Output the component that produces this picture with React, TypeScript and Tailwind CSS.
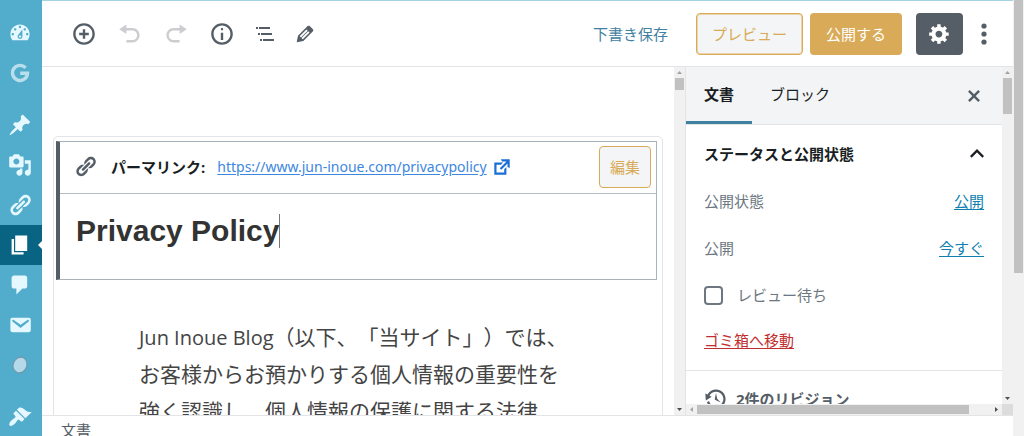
import { ReactNode, useState } from 'react';

const ICONS = {
  dashboard:
    'M3.76 16h12.48c1.1-1.37 1.76-3.11 1.76-5 0-4.42-3.58-8-8-8s-8 3.58-8 8c0 1.89.66 3.63 1.76 5zM10 4c.55 0 1 .45 1 1s-.45 1-1 1-1-.45-1-1 .45-1 1-1zM6 6c.55 0 1 .45 1 1s-.45 1-1 1-1-.45-1-1 .45-1 1-1zm8 0c.55 0 1 .45 1 1s-.45 1-1 1-1-.45-1-1 .45-1 1-1zm-5.37 5.55L12 7v6c0 1.1-.9 2-2 2s-2-.9-2-2c0-.57.24-1.08.63-1.45zM4 10c.55 0 1 .45 1 1s-.45 1-1 1-1-.45-1-1 .45-1 1-1zm12 0c.55 0 1 .45 1 1s-.45 1-1 1-1-.45-1-1 .45-1 1-1zm-5 3c0-.55-.45-1-1-1s-1 .45-1 1 .45 1 1 1 1-.45 1-1z',
  pin: 'M10.44 3.02l1.82-1.82 6.36 6.35-1.83 1.82c-1.05-.68-2.48-.57-3.41.36l-.75.75c-.92.93-1.04 2.35-.35 3.41l-1.83 1.82-2.41-2.41-2.8 2.79c-.42.42-3.38 2.71-3.8 2.29s1.86-3.39 2.28-3.81l2.79-2.79L4.1 9.36l1.83-1.82c1.05.69 2.48.57 3.4-.36l.75-.75c.93-.92 1.05-2.35.36-3.41z',
  media:
    'M13 11V4c0-.55-.45-1-1-1h-1.67L9 1H5L3.67 3H2c-.55 0-1 .45-1 1v7c0 .55.45 1 1 1h10c.55 0 1-.45 1-1zM7 4.5c1.38 0 2.5 1.12 2.5 2.5S8.38 9.5 7 9.5 4.5 8.38 4.5 7 5.62 4.5 7 4.5zM14 6h5v10.5c0 1.38-1.12 2.5-2.5 2.5S14 17.88 14 16.5s1.12-2.5 2.5-2.5c.17 0 .34.02.5.05V9h-3V6zm-4 8.05V13h2v3.5c0 1.38-1.12 2.5-2.5 2.5S7 17.88 7 16.5 8.12 14 9.5 14c.17 0 .34.02.5.05z',
  link: 'M17.74 2.76c1.68 1.69 1.68 4.41 0 6.1l-1.53 1.52c-1.12 1.12-2.7 1.47-4.14 1.09l2.62-2.61.76-.77.76-.76c.84-.84.84-2.2 0-3.04-.84-.85-2.2-.85-3.04 0l-.77.76-3.38 3.38c-.37-1.44-.02-3.02 1.1-4.14l1.52-1.53c1.69-1.68 4.42-1.68 6.1 0zM8.59 13.43l5.34-5.34c.42-.42.42-1.1 0-1.52-.44-.43-1.13-.39-1.53 0l-5.33 5.34c-.42.42-.42 1.1 0 1.52.44.43 1.13.39 1.52 0zm-.76 2.29l4.14-4.15c.38 1.44.03 3.02-1.09 4.14l-1.52 1.53c-1.69 1.68-4.41 1.68-6.1 0-1.68-1.68-1.68-4.42 0-6.1l1.53-1.52c1.12-1.12 2.7-1.47 4.14-1.1l-4.14 4.15c-.85.84-.85 2.2 0 3.05.84.84 2.2.84 3.04 0z',
  page: 'M6 15V2h10v13H6zm-1 1h8v2H3V5h2v11z',
  comment: 'M5 2h9c1.1 0 2 .9 2 2v7c0 1.1-.9 2-2 2h-2l-5 5v-5H5c-1.1 0-2-.9-2-2V4c0-1.1.9-2 2-2z',
  mail: 'M3.87 4h13.25C18.37 4 19 4.59 19 5.79v8.42c0 1.19-.63 1.79-1.88 1.79H3.87c-1.25 0-1.88-.6-1.88-1.79V5.79c0-1.2.63-1.79 1.88-1.79zm6.62 8.6l6.74-5.53c.24-.2.43-.66.13-1.07-.29-.41-.82-.42-1.17-.17l-5.7 3.86L4.8 5.83c-.35-.25-.88-.24-1.17.17-.3.41-.11.87.13 1.07z',
  brush:
    'M14.48 11.06L7.41 3.99l1.5-1.5c.5-.56 2.3-.47 3.51.32 1.21.8 1.43 1.28 2.91 2.1 1.18.64 2.45 1.26 4.45.85zm-.71.71L6.7 4.7 4.93 6.47c-.39.39-.39 1.02 0 1.41l1.06 1.06c.39.39.39 1.03 0 1.42-.6.6-1.43 1.11-2.21 1.69-.35.26-.7.53-1.01.84C1.43 14.23.4 16.08 1.4 17.07c.99 1 2.84-.03 4.18-1.36.31-.31.58-.66.85-1.02.57-.78 1.08-1.61 1.69-2.21.39-.39 1.02-.39 1.41 0l1.06 1.06c.39.39 1.02.39 1.41 0z',
  insert:
    'M10 1c-5 0-9 4-9 9s4 9 9 9 9-4 9-9-4-9-9-9zm0 16c-3.9 0-7-3.1-7-7s3.1-7 7-7 7 3.1 7 7-3.1 7-7 7zm1-11H9v3H6v2h3v3h2v-3h3V9h-3V6z',
  undo: 'M12 5H7V2L1 6l6 4V7h5c2.2 0 4 1.8 4 4s-1.8 4-4 4H7v2h5c3.3 0 6-2.7 6-6s-2.7-6-6-6z',
  redo: 'M8 5h5V2l6 4-6 4V7H8c-2.2 0-4 1.8-4 4s1.8 4 4 4h5v2H8c-3.3 0-6-2.7-6-6s2.7-6 6-6z',
  info: 'M9 15h2V9H9v6zm1-10c-.5 0-1 .5-1 1s.5 1 1 1 1-.5 1-1-.5-1-1-1zm0-4c-5 0-9 4-9 9s4 9 9 9 9-4 9-9-4-9-9-9zm0 16c-3.9 0-7-3.1-7-7s3.1-7 7-7 7 3.1 7 7-3.1 7-7 7z',
  edit: 'M13.89 3.39l2.71 2.72c.46.46.42 1.24.03 1.64l-8.01 8.02-5.56 1.16 1.16-5.58s7.6-7.63 7.99-8.03c.39-.39 1.22-.39 1.68.07zm-2.73 2.79l-5.59 5.61 1.11 1.11 5.54-5.65zm-2.97 8.23l5.58-5.6-1.07-1.08-5.59 5.6z',
  gear: 'M18 12h-2.18c-.17.7-.44 1.35-.81 1.93l1.54 1.54-2.1 2.1-1.54-1.54c-.58.36-1.23.63-1.91.79V19H8v-2.18c-.68-.16-1.33-.43-1.91-.79l-1.54 1.54-2.12-2.12 1.54-1.54c-.36-.58-.63-1.23-.79-1.91H1V9.03h2.17c.16-.7.44-1.35.8-1.94L2.43 5.55l2.1-2.1 1.54 1.54c.58-.37 1.24-.64 1.93-.81V2h3v2.18c.68.16 1.33.43 1.91.79l1.54-1.54 2.12 2.12-1.54 1.54c.36.59.64 1.24.8 1.94H18V12zm-8.5 1.5c1.66 0 3-1.34 3-3s-1.34-3-3-3-3 1.34-3 3 1.34 3 3 3z',
  close:
    'M14.95 6.46L11.41 10l3.54 3.54-1.41 1.41L10 11.42l-3.53 3.53-1.42-1.42L8.58 10 5.05 6.47l1.42-1.42L10 8.58l3.54-3.53z',
  external: 'M9 3h8v8l-2-1V6.92l-5.6 5.59-1.41-1.41L14.08 5H10zm3 12v-3l2-2v7H3V6h8L9 8H5v7h7z',
  backup:
    'M13.65 2.88c3.93 2.01 5.48 6.84 3.47 10.77s-6.83 5.48-10.77 3.47c-1.87-.96-3.2-2.56-3.86-4.4l1.64-1.03c.45 1.57 1.52 2.95 3.08 3.76 3.01 1.54 6.69.35 8.23-2.66 1.55-3.01.36-6.69-2.65-8.24C9.78 3.01 6.1 4.2 4.56 7.21l1.88.97-4.95 3.08-.39-5.82 1.78.91C4.9 2.4 9.75.89 13.65 2.88zm-4.36 7.83C9.11 10.53 9 10.28 9 10c0-.07.03-.12.04-.19h-.01L10 5l.97 4.81L14 13l-4.5-2.12.02-.02c-.08-.04-.16-.09-.23-.15z',
};

type IconName = keyof typeof ICONS;

function Icon({ name, className = 'size-6' }: { name: IconName; className?: string }) {
  return (
    <svg viewBox="0 0 20 20" fill="currentColor" className={`shrink-0 ${className}`} aria-hidden="true">
      <path d={ICONS[name]} />
    </svg>
  );
}

function NavItem({ label, active, children }: { label: string; active?: boolean; children: ReactNode }) {
  return (
    <a
      href="#"
      aria-label={label}
      className={`relative flex h-10 shrink-0 items-center justify-center pr-0.5 ${active ? 'bg-[#096484] text-white' : 'text-[#e5f8ff]'}`}
    >
      {children}
      {active && (
        <span className="absolute right-0 top-4 border-y-4 border-r-4 border-y-transparent border-r-white" />
      )}
    </a>
  );
}

function AdminMenu() {
  return (
    <nav className="flex w-[42px] shrink-0 flex-col overflow-hidden bg-[#52accc] pt-[13px]">
      <NavItem label="ダッシュボード"><Icon name="dashboard" /></NavItem>
      <NavItem label="Site Kit">
        <svg viewBox="0 0 20 20" className="size-5 text-[#b9dfec]" fill="none" stroke="currentColor" strokeWidth="3.4" aria-hidden="true">
          <path d="M15.6 4.9A7.5 7.5 0 1 0 17.5 10.3H10.2" />
        </svg>
      </NavItem>
      <div className="h-3 shrink-0" />
      <NavItem label="投稿"><Icon name="pin" /></NavItem>
      <NavItem label="メディア"><Icon name="media" /></NavItem>
      <NavItem label="リンク"><Icon name="link" /></NavItem>
      <NavItem label="固定ページ" active><Icon name="page" /></NavItem>
      <NavItem label="コメント"><Icon name="comment" /></NavItem>
      <NavItem label="お問い合わせ"><Icon name="mail" /></NavItem>
      <NavItem label="プラグイン">
        <svg viewBox="0 0 20 20" className="size-5" aria-hidden="true">
          <ellipse cx="10" cy="10" rx="6.8" ry="8" transform="rotate(22 10 10)" fill="#b4d9e8" stroke="#6f98a8" strokeWidth="1.1" />
        </svg>
      </NavItem>
      <div className="h-3 shrink-0" />
      <NavItem label="外観"><Icon name="brush" /></NavItem>
    </nav>
  );
}

function ToolButton({ label, wide, disabled, children }: { label: string; wide?: boolean; disabled?: boolean; children: ReactNode }) {
  return (
    <button
      type="button"
      aria-label={label}
      disabled={disabled}
      className={`flex h-10 items-center justify-center text-[#555d66] disabled:text-[#cbcdd0] ${wide ? 'w-[46px]' : 'w-10'}`}
    >
      {children}
    </button>
  );
}

function EditorHeader() {
  return (
    <header className="flex h-[66px] shrink-0 items-center border-b border-[#e2e4e7] pl-[19px] pr-2">
      <ToolButton label="ブロックの追加" wide><Icon name="insert" /></ToolButton>
      <ToolButton label="元に戻す" wide disabled><Icon name="undo" /></ToolButton>
      <ToolButton label="やり直す" wide disabled><Icon name="redo" /></ToolButton>
      <ToolButton label="コンテンツ構造" wide><Icon name="info" /></ToolButton>
      <ToolButton label="ブロックナビゲーション">
        <svg viewBox="0 0 24 24" fill="currentColor" className="size-6" aria-hidden="true">
          <path d="M5 5H3v2h2V5zm3 8h11v-2H8v2zm9-8H6v2h11V5zM7 11H5v2h2v-2zm0 8h2v-2H7v2zm3-2v2h11v-2H10z" />
        </svg>
      </ToolButton>
      <ToolButton label="ツール"><Icon name="edit" /></ToolButton>

      <button type="button" className="ml-auto text-[#3f819f]">下書き保存</button>
      <button type="button" className="ml-7 h-[42px] rounded border border-[#d9ab59] bg-[#f3f5f6] px-[15px] text-[#d9ab59] shadow-[inset_0_0_0_1px_#ecd5ab]">
        プレビュー
      </button>
      <button type="button" className="ml-[7px] h-[42px] rounded bg-[#d9ab59] px-4 text-white">
        公開する
      </button>
      <button type="button" aria-label="設定" className="ml-3.5 flex h-[42px] w-[47px] items-center justify-center rounded bg-[#555d66] text-white">
        <Icon name="gear" className="size-[23px]" />
      </button>
      <button type="button" aria-label="詳細" className="flex h-[42px] w-[42px] items-center justify-center text-[#555d66]">
        <svg viewBox="0 0 6 22" fill="currentColor" className="h-[22px] w-1.5" aria-hidden="true">
          <circle cx="3" cy="3" r="2.6" />
          <circle cx="3" cy="11" r="2.6" />
          <circle cx="3" cy="19" r="2.6" />
        </svg>
      </button>
    </header>
  );
}

function Arrow({ className = '', dim }: { className?: string; dim?: boolean }) {
  return (
    <svg viewBox="0 0 11 11" className={`size-[11px] shrink-0 ${dim ? 'text-[#a3a3a3]' : 'text-[#505050]'} ${className}`} aria-hidden="true">
      <path d="M3 7h5L5.5 4z" fill="currentColor" />
    </svg>
  );
}

function VerticalBar({ thumb }: { thumb: string }) {
  return (
    <div className="flex w-[11px] shrink-0 flex-col bg-[#f1f1f1]">
      <Arrow dim />
      <div className={`mx-px bg-[#c1c1c1] ${thumb}`} />
      <Arrow className="mt-auto rotate-180" />
    </div>
  );
}

function Canvas() {
  const [title, setTitle] = useState('Privacy Policy');
  return (
    <main className="min-w-0 flex-1 overflow-hidden px-[11px] pt-[69px]">
      <div className="h-[400px] rounded-t-[5px] border border-[#e2e4e7] pl-0.5 pr-[5px] pt-1">
        <section className="border border-l-4 border-[#a8b2ba] border-l-[#555d66]">
          <div className="flex h-[52px] items-center border-b border-[#b5bcc2] pb-0.5 pl-3.5 pr-[5px]">
            <Icon name="link" className="size-[23px] text-[#555d66]" />
            <span className="ml-3.5 font-bold text-[#191e23]">パーマリンク:</span>
            <a href="#" className="ml-3 flex items-center gap-1 text-[#3d87e0]">
              <span className="font-['Noto_Sans',sans-serif] text-[14px] underline underline-offset-2">
                https://www.jun-inoue.com/privacypolicy
              </span>
              <Icon name="external" className="size-[22px] text-[#1a6fd6]" />
            </a>
            <button type="button" className="ml-auto h-[42px] rounded border border-[#d9ab59] bg-[#f3f5f6] px-2.5 text-[#d9ab59]">
              編集
            </button>
          </div>
          <div className="flex h-[85px] pl-4 pt-5">
            <input
              aria-label="タイトルを追加"
              value={title}
              onChange={(e) => setTitle(e.target.value)}
              className="field-sizing-content h-[34px] font-['Liberation_Sans',sans-serif] text-[30px] font-bold leading-[34px] text-[#333] outline-none"
            />
            <span className="h-[34px] w-px bg-[#777]" />
          </div>
        </section>
        <p className="mt-[39px] whitespace-nowrap pl-[83px] text-[21px] leading-[37px] text-[#444] [text-spacing-trim:space-all]">
          <span className="text-[20px]">Jun Inoue Blog</span>（以下、「当サイト」）では、
          <br />
          お客様からお預かりする個人情報の重要性を
          <br />
          強く認識し、個人情報の保護に関する法律、
        </p>
      </div>
    </main>
  );
}

function SettingRow({ label, value }: { label: string; value: string }) {
  return (
    <div className="mb-[23px] flex h-6 items-center justify-between">
      <span>{label}</span>
      <a href="#" className="text-[#0f7fb0] underline underline-offset-2">{value}</a>
    </div>
  );
}

function SettingsPanel() {
  return (
    <aside className="flex w-[328px] shrink-0 flex-col border-l border-[#e2e4e7]">
      <div className="flex min-h-0 flex-1">
        <div className="min-w-0 flex-1 overflow-hidden text-[#6c7781]">
          <div role="tablist" className="flex h-[58px] border-b border-[#e2e4e7] bg-[#f3f4f5] text-[#191e23]">
            <button type="button" role="tab" aria-selected="true" className="border-b-3 border-[#3f819f] px-[18px] font-bold">
              文書
            </button>
            <button type="button" role="tab" aria-selected="false" className="border-b-3 border-transparent px-[18px]">
              ブロック
            </button>
            <button type="button" aria-label="設定を閉じる" className="ml-auto mr-4 text-[#555d66]">
              <Icon name="close" />
            </button>
          </div>
          <section className="border-b border-[#e2e4e7] px-[18px] pb-[18px] pt-[17px]">
            <h2 className="mb-[23px]">
              <button type="button" className="flex h-6 w-full items-center justify-between font-bold text-[#191e23]">
                ステータスと公開状態
                <svg viewBox="6 6 12 12" className="size-3.5" fill="none" stroke="currentColor" strokeWidth="2" aria-hidden="true">
                  <path d="M6.7 14.5l5.3-5.3 5.3 5.3" />
                </svg>
              </button>
            </h2>
            <SettingRow label="公開状態" value="公開" />
            <SettingRow label="公開" value="今すぐ" />
            <label className="flex h-6 items-center gap-3.5">
              <input type="checkbox" className="size-[19px] appearance-none rounded-sm border-2 border-[#6c7781] bg-white" />
              レビュー待ち
            </label>
            <button type="button" className="mt-[21px] block h-6 text-[#c02f2f] underline underline-offset-2">
              ゴミ箱へ移動
            </button>
          </section>
          <button type="button" className="flex h-14 items-center gap-2 px-[18px] font-bold text-[#555d66]">
            <Icon name="backup" />
            2件のリビジョン
          </button>
        </div>
        <VerticalBar thumb="h-9" />
      </div>
      <div className="flex h-[11px] shrink-0">
        <div className="flex flex-1 bg-[#f1f1f1]">
          <Arrow dim className="-rotate-90" />
          <div className="my-px mr-[22px] flex-1 bg-[#c1c1c1]" />
          <Arrow className="rotate-90" />
        </div>
        <div className="w-[11px] bg-[#dcdcdc]" />
      </div>
    </aside>
  );
}

export default function App() {
  return (
    <div className="flex h-screen overflow-hidden bg-white font-['Open_Sans','Noto_Sans_CJK_JP',sans-serif] text-[15px] leading-6">
      <AdminMenu />
      <div className="flex min-w-0 flex-1 flex-col border-t border-[#a5d3e5]">
        <EditorHeader />
        <div className="flex min-h-0 flex-1">
          <Canvas />
          <VerticalBar thumb="h-3" />
          <SettingsPanel />
        </div>
        <footer className="h-[21px] shrink-0 overflow-hidden border-t border-[#e2e4e7] px-[19px] pt-0.5 text-[#555d66]">
          文書
        </footer>
      </div>
      <div className="w-[11px] shrink-0 bg-[#f1f1f1]">
        <div className="mx-px h-[273px] bg-[#c1c1c1]" />
      </div>
    </div>
  );
}
